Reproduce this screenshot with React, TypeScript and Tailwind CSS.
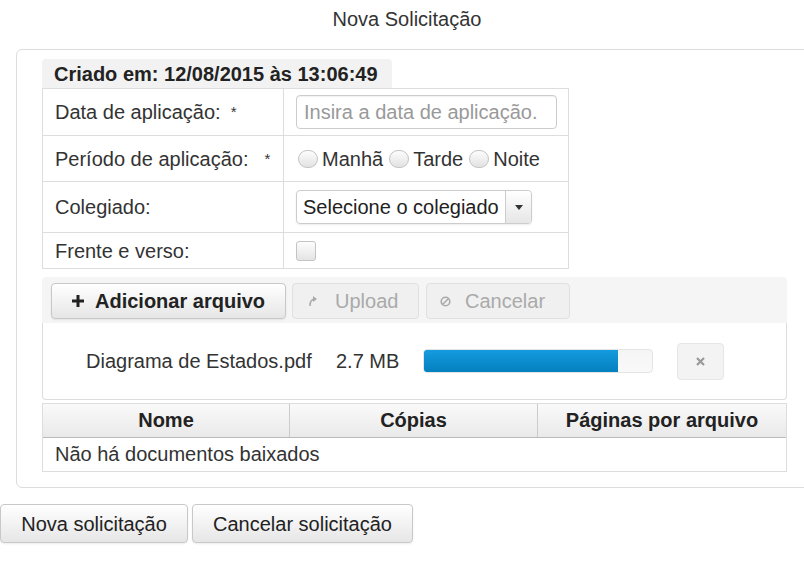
import React from "react";

const btn =
  "flex items-center rounded-[4px] border border-[#c8c8c8] bg-gradient-to-b from-white to-[#e6e6e6] shadow-[0_1px_2px_rgba(0,0,0,0.08)]";

function Radio({ label }: { label: string }) {
  return (
    <span className="flex items-center">
      <span className="mr-[4px] h-[18px] w-[20px] rounded-full border border-[#c4c4c4] bg-gradient-to-b from-[#fdfdfd] to-[#e2e2e2]" />
      <span>{label}</span>
    </span>
  );
}

export default function App() {
  return (
    <div className="h-[579px] w-[804px] overflow-hidden bg-white font-['Liberation_Sans',Arial,sans-serif] text-[20px] leading-[28px] text-[#333]">
      <div className="h-[49px] pt-[5px] pl-[10px] text-center">Nova Solicitação</div>

      <div className="ml-[16px] w-[830px] rounded-l-[6px] border border-[#dcdcdc] pt-[9px] pb-[15px] pl-[25px]">
        <div className="h-[29px] w-[350px] rounded-t-[4px] bg-[#f2f2f2] pl-[12px] font-bold leading-[31px] text-[#222]">
          Criado em: 12/08/2015 às 13:06:49
        </div>

        <div className="w-[527px] border border-[#dddddd]">
          <div className="grid h-[46px] grid-cols-[241px_1fr] items-center">
            <div className="flex h-full items-center border-r border-[#dddddd] pl-[12px]">
              Data de aplicação: <span className="ml-[10px] text-[15px]">*</span>
            </div>
            <div className="pl-[12px]">
              <div className="h-[34px] w-[261px] rounded-[4px] border border-[#cccccc] pl-[7px] leading-[32px] text-[#999] shadow-[inset_0_1px_1px_rgba(0,0,0,0.06)]">
                Insira a data de aplicação.
              </div>
            </div>
          </div>
          <div className="grid h-[46px] grid-cols-[241px_1fr] items-center border-t border-[#dddddd]">
            <div className="flex h-full items-center border-r border-[#dddddd] pl-[12px]">
              Período de aplicação: <span className="ml-[16px] text-[15px]">*</span>
            </div>
            <div className="flex items-center gap-[6px] pl-[14px]">
              <Radio label="Manhã" />
              <Radio label="Tarde" />
              <Radio label="Noite" />
            </div>
          </div>
          <div className="grid h-[51px] grid-cols-[241px_1fr] items-center border-t border-[#dddddd]">
            <div className="flex h-full items-center border-r border-[#dddddd] pl-[12px]">Colegiado:</div>
            <div className="pl-[12px]">
              <div className="flex h-[34px] w-[236px] rounded-[4px] border border-[#cccccc] shadow-[0_1px_2px_rgba(0,0,0,0.08)]">
                <div className="flex-1 pl-[6px] leading-[32px] text-[#222]">Selecione o colegiado</div>
                <div className="flex w-[26px] items-center justify-center rounded-r-[4px] border-l border-[#cccccc] bg-gradient-to-b from-white to-[#e6e6e6]">
                  <svg width="8" height="5" viewBox="0 0 8 5">
                    <path d="M0 0h8L4 5z" fill="#333" />
                  </svg>
                </div>
              </div>
            </div>
          </div>
          <div className="grid h-[36px] grid-cols-[241px_1fr] items-center border-t border-[#dddddd]">
            <div className="flex h-full items-center border-r border-[#dddddd] pl-[12px]">Frente e verso:</div>
            <div className="pl-[12px]">
              <div className="h-[20px] w-[20px] rounded-[3px] border border-[#c4c4c4] bg-gradient-to-b from-[#fdfdfd] to-[#e4e4e4]" />
            </div>
          </div>
        </div>

        <div className="mt-[8px] w-[745px]">
          <div className="flex h-[46px] items-start gap-[6px] rounded-t-[4px] bg-[#f5f5f5] pt-[6px] pl-[9px]">
            <div className={`${btn} h-[36px] w-[235px] pl-[20px] font-bold text-[#222]`}>
              <svg width="12" height="12" viewBox="0 0 12 12" className="mr-[11px]">
                <path d="M4.5 0h3v4.5H12v3H7.5V12h-3V7.5H0v-3h4.5z" fill="#222" />
              </svg>
              Adicionar arquivo
            </div>
            <div className="flex h-[36px] w-[127px] items-center rounded-[4px] border border-[#e0e0e0] bg-[#f0f0f0] pl-[15px] text-[#aaa]">
              <svg width="10" height="12" viewBox="0 0 10 12" className="mr-[17px]">
                <path d="M2 11C2 6 4 4 7 4" stroke="#aaa" strokeWidth="1.6" fill="none" />
                <path d="M5 1l4 3-4 3z" fill="#aaa" />
              </svg>
              Upload
            </div>
            <div className="ml-[1px] flex h-[36px] w-[144px] items-center rounded-[4px] border border-[#e0e0e0] bg-[#f0f0f0] pl-[13px] text-[#aaa]">
              <svg width="11" height="11" viewBox="0 0 11 11" className="mr-[14px]">
                <circle cx="5.5" cy="5.5" r="4.3" stroke="#aaa" strokeWidth="1.6" fill="none" />
                <path d="M2.5 8.5l6-6" stroke="#aaa" strokeWidth="1.6" />
              </svg>
              Cancelar
            </div>
          </div>
          <div className="flex h-[77px] items-center rounded-b-[4px] border-x border-b border-[#dddddd] pl-[43px]">
            <span className="w-[250px]">Diagrama de Estados.pdf</span>
            <span className="w-[87px]">2.7 MB</span>
            <div className="h-[24px] w-[230px] overflow-hidden rounded-[4px] border border-[#e4e4e4] bg-gradient-to-b from-[#f5f5f5] to-[#f9f9f9]">
              <div className="h-full w-[194px] bg-gradient-to-b from-[#149bdf] to-[#0480be]" />
            </div>
            <div className="ml-[24px] flex h-[37px] w-[47px] items-center justify-center rounded-[4px] border border-[#e6e6e6] bg-[#f3f3f3]">
              <svg width="9" height="9" viewBox="0 0 9 9">
                <path d="M1 1l7 7M8 1L1 8" stroke="#999" strokeWidth="2.2" />
              </svg>
            </div>
          </div>

          <div className="mt-[3px] border border-[#dddddd]">
            <div className="grid h-[34px] grid-cols-[247px_248px_1fr] border-b border-[#bbbbbb] bg-gradient-to-b from-[#fafafa] to-[#e9e9e9] text-center font-bold leading-[33px] text-[#222]">
              <div className="border-r border-[#cccccc]">Nome</div>
              <div className="border-r border-[#cccccc]">Cópias</div>
              <div>Páginas por arquivo</div>
            </div>
            <div className="h-[33px] pl-[12px] leading-[33px]">Não há documentos baixados</div>
          </div>
        </div>
      </div>

      <div className="mt-[16px] flex gap-[4px]">
        <div className={`${btn} h-[39px] w-[188px] justify-center text-[#222]`}>Nova solicitação</div>
        <div className={`${btn} h-[39px] w-[221px] justify-center text-[#222]`}>Cancelar solicitação</div>
      </div>
    </div>
  );
}
